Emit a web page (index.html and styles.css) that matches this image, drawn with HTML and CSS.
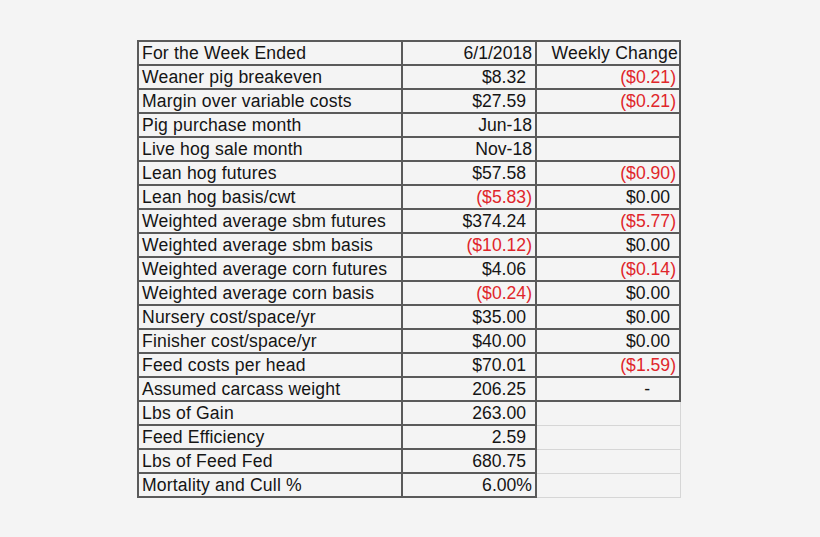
FILE: index.html
```html
<!DOCTYPE html>
<html>
<head>
<meta charset="utf-8">
<link rel="stylesheet" href="styles.css">
</head>
<body>
<table class="sheet">
  <tbody>
    <tr><td class="lbl">For the Week Ended</td><td class="val gen">6/1/2018</td><td class="chg head">Weekly Change</td></tr>
    <tr><td class="lbl">Weaner pig breakeven</td><td class="val">$8.32</td><td class="chg neg">($0.21)</td></tr>
    <tr><td class="lbl">Margin over variable costs</td><td class="val">$27.59</td><td class="chg neg">($0.21)</td></tr>
    <tr><td class="lbl">Pig purchase month</td><td class="val gen">Jun-18</td><td class="chg"></td></tr>
    <tr><td class="lbl">Live hog sale month</td><td class="val gen">Nov-18</td><td class="chg"></td></tr>
    <tr><td class="lbl">Lean hog futures</td><td class="val">$57.58</td><td class="chg neg">($0.90)</td></tr>
    <tr><td class="lbl">Lean hog basis/cwt</td><td class="val neg">($5.83)</td><td class="chg">$0.00</td></tr>
    <tr><td class="lbl">Weighted average sbm futures</td><td class="val">$374.24</td><td class="chg neg">($5.77)</td></tr>
    <tr><td class="lbl">Weighted average sbm basis</td><td class="val neg">($10.12)</td><td class="chg">$0.00</td></tr>
    <tr><td class="lbl">Weighted average corn futures</td><td class="val">$4.06</td><td class="chg neg">($0.14)</td></tr>
    <tr><td class="lbl">Weighted average corn basis</td><td class="val neg">($0.24)</td><td class="chg">$0.00</td></tr>
    <tr><td class="lbl">Nursery cost/space/yr</td><td class="val">$35.00</td><td class="chg">$0.00</td></tr>
    <tr><td class="lbl">Finisher cost/space/yr</td><td class="val">$40.00</td><td class="chg">$0.00</td></tr>
    <tr><td class="lbl">Feed costs per head</td><td class="val">$70.01</td><td class="chg neg">($1.59)</td></tr>
    <tr><td class="lbl">Assumed carcass weight</td><td class="val">206.25</td><td class="chg dash">-</td></tr>
    <tr><td class="lbl">Lbs of Gain</td><td class="val">263.00</td><td class="chg open"></td></tr>
    <tr><td class="lbl">Feed Efficiency</td><td class="val">2.59</td><td class="chg open"></td></tr>
    <tr><td class="lbl">Lbs of Feed Fed</td><td class="val">680.75</td><td class="chg open"></td></tr>
    <tr><td class="lbl">Mortality and Cull %</td><td class="val gen">6.00%</td><td class="chg open"></td></tr>
  </tbody>
</table>
</body>
</html>
```
FILE: styles.css
```css
html, body {
  margin: 0;
  background: #f4f4f4;
}
body {
  padding: 40px 0 0 137px;
  font-family: "Liberation Sans", Arial, sans-serif;
  font-size: 17.6px;
  color: #151515;
}
.sheet {
  border-collapse: separate;
  border-spacing: 0;
  table-layout: fixed;
  width: 544px;
}
.sheet td {
  box-sizing: border-box;
  height: 24px;
  padding: 1px 3px 0 3px;
  line-height: 21px;
  white-space: nowrap;
  border-right: 2px solid #5a5a5a;
  border-bottom: 2px solid #5a5a5a;
  vertical-align: middle;
  overflow: visible;
}
.sheet tr:first-child td {
  border-top: 2px solid #5a5a5a;
  height: 26px;
}
.lbl {
  width: 266px;
  border-left: 2px solid #5a5a5a;
  padding-left: 3px !important;
  letter-spacing: 0.17px;
}
.val {
  width: 134px;
  text-align: right;
  padding-right: 9px !important;
}
.chg {
  width: 144px;
  text-align: right;
  padding-right: 9px !important;
}
.gen, .neg {
  padding-right: 3px !important;
}
.chg.head {
  padding-right: 1px !important;
  padding-left: 0 !important;
  letter-spacing: 0.2px;
}
.neg {
  color: #e0262b;
}
.chg.dash {
  padding-right: 29px !important;
}
.chg.open {
  border-right: 1px solid #d6d6d6;
  border-bottom: 1px solid #d6d6d6;
}
.sheet tr:nth-child(15) .chg {
  border-bottom: 2px solid #5a5a5a;
}
.sheet tr:last-child td.open {
  border-bottom: 1px solid #d6d6d6;
}
```
